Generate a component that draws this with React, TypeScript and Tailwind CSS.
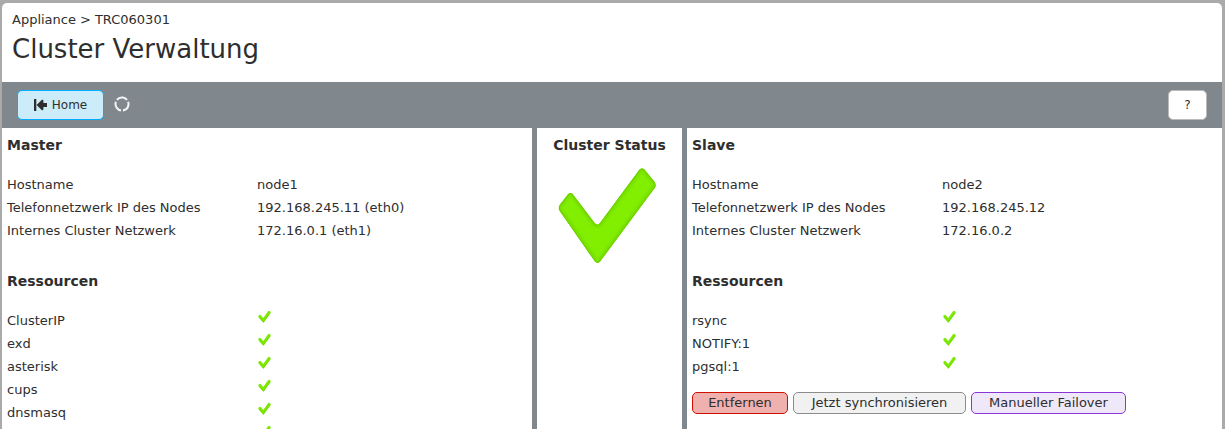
import React, { useId } from 'react';

type Detail = { label: string; value: string };

const masterDetails: Detail[] = [
  { label: 'Hostname', value: 'node1' },
  { label: 'Telefonnetzwerk IP des Nodes', value: '192.168.245.11 (eth0)' },
  { label: 'Internes Cluster Netzwerk', value: '172.16.0.1 (eth1)' },
];

const slaveDetails: Detail[] = [
  { label: 'Hostname', value: 'node2' },
  { label: 'Telefonnetzwerk IP des Nodes', value: '192.168.245.12' },
  { label: 'Internes Cluster Netzwerk', value: '172.16.0.2' },
];

const masterResources = ['ClusterIP', 'exd', 'asterisk', 'cups', 'dnsmasq', ''];
const slaveResources = ['rsync', 'NOTIFY:1', 'pgsql:1'];

function SmallCheck() {
  return (
    <svg viewBox="0 0 13 13" className="block size-[13px]" aria-hidden="true">
      <path d="M1.9 6.4 5.4 10.4 11.1 2.4" fill="none" stroke="#7cea00" strokeWidth="3" strokeLinecap="round" strokeLinejoin="miter" />
      <path d="M1.2 7.4 5.3 12.2 12.2 3" fill="none" stroke="#70d400" strokeWidth="0.7" />
    </svg>
  );
}

const bigCheckPath =
  'M14.2 25.6Q12 24.2 10.1 26.2L2 36.6Q-.2 39.6 1.6 42.8L37 93.6Q39.5 96.2 42 93.6L97 19.5Q98.4 17.2 96.6 14L86.4 1.6Q84 -.4 81.6 1.6L42 55Q39.5 58.4 36.6 55Z';

function BigCheck() {
  const id = useId();
  return (
    <svg viewBox="0 0 99 97" className="h-[97px] w-[99px]" aria-hidden="true">
      <defs>
        <clipPath id={id}>
          <path d={bigCheckPath} />
        </clipPath>
      </defs>
      <path d={bigCheckPath} fill="#82ef00" />
      <g clipPath={`url(#${id})`} fill="none">
        <path d={bigCheckPath} stroke="#7ae300" strokeWidth="9" opacity="0.45" />
        <path d={bigCheckPath} stroke="#73d800" strokeWidth="5" opacity="0.5" />
        <path d={bigCheckPath} stroke="#6aca00" strokeWidth="2" opacity="0.7" />
      </g>
    </svg>
  );
}

function HomeIcon() {
  return (
    <svg viewBox="0 0 13 12" className="h-3 w-[13px]" fill="#2e2e2e" aria-hidden="true">
      <path d="M0 0h2.3v12H0zM2.6 6 8.2.4 9.4 1.6V3.9H13v4.2H9.4v2.3L8.2 11.6z" />
    </svg>
  );
}

function Spinner() {
  return (
    <svg viewBox="0 0 16 16" className="size-4" aria-label="Aktualisierung" role="img">
      <circle cx="8" cy="8" r="6.5" fill="none" stroke="#f4f4f4" strokeWidth="2" pathLength="99" strokeDasharray="28 5" transform="rotate(99 8 8)" />
    </svg>
  );
}

function Heading({ children }: { children: React.ReactNode }) {
  return <h2 className="text-sm leading-[18px] font-bold">{children}</h2>;
}

function Node({ title, details, resources, children }: { title: string; details: Detail[]; resources: string[]; children?: React.ReactNode }) {
  return (
    <section className="min-w-0 bg-white px-[5px] pt-2">
      <Heading>{title}</Heading>
      <table className="mt-[19px] w-full table-fixed border-collapse text-left">
        <tbody>
          {details.map((d) => (
            <tr key={d.label} className="h-[23px]">
              <th scope="row" className="w-[250px] p-0 font-normal">{d.label}</th>
              <td className="p-0">{d.value}</td>
            </tr>
          ))}
        </tbody>
      </table>
      <div className="mt-[30px]">
        <Heading>Ressourcen</Heading>
      </div>
      <table className="mt-[19px] w-full table-fixed border-collapse text-left">
        <tbody>
          {resources.map((name) => (
            <tr key={name} className="h-[23px]">
              <th scope="row" className="w-[250px] p-0 font-normal">{name}</th>
              <td className="p-0 pb-2 pl-px" aria-label="OK"><SmallCheck /></td>
            </tr>
          ))}
        </tbody>
      </table>
      {children}
    </section>
  );
}

export default function App() {
  return (
    <div className="h-screen overflow-hidden bg-[#aaaaaa] pt-[3px] pr-[3px] pl-0.5 font-['DejaVu_Sans',Verdana,sans-serif] text-[13px] leading-[18px] text-[#2e2e2e]">
      <main className="flex min-h-full flex-col overflow-hidden rounded-t-[5px] bg-white">
        <header className="h-[79px] px-2.5 pt-2">
          <nav aria-label="Pfad" className="flex gap-1">
            <a href="#appliance">Appliance</a>
            <span>&gt;</span>
            <a href="#node">TRC060301</a>
          </nav>
          <h1 className="mt-1 text-[26px] leading-8">Cluster Verwaltung</h1>
        </header>
        <div className="flex h-[46px] items-center bg-[#81888d] px-[15px]">
          <button type="button" className="flex h-[30px] w-[87px] items-center justify-center gap-[5px] rounded-[5px] border border-[#00aeff] bg-[#cdecf9] text-xs">
            <HomeIcon />
            Home
          </button>
          <span className="ml-2.5 pb-0.5"><Spinner /></span>
          <button type="button" className="ml-auto h-[30px] w-[39px] rounded-[5px] border border-[#bbbbbb] bg-white text-xs">?</button>
        </div>
        <div className="grid flex-1 grid-cols-[530fr_145px_535fr] gap-[5px] bg-[#81888d]">
          <Node title="Master" details={masterDetails} resources={masterResources} />
          <section className="flex flex-col items-center bg-white pt-2">
            <Heading>Cluster Status</Heading>
            <div className="mt-3.5 pr-1"><BigCheck /></div>
          </section>
          <Node title="Slave" details={slaveDetails} resources={slaveResources}>
            <div className="mt-[14px] flex gap-[5px]">
              <button type="button" className="h-[22px] w-24 rounded-[5px] border border-[#cc1100] bg-[#f0b0ae]">Entfernen</button>
              <button type="button" className="h-[22px] w-[173px] rounded-[5px] border border-[#8c8c8c] bg-[#f1f1f1]">Jetzt synchronisieren</button>
              <button type="button" className="h-[22px] w-[155px] rounded-[5px] border border-[#8a35d8] bg-[#efe8f8]">Manueller Failover</button>
            </div>
          </Node>
        </div>
      </main>
    </div>
  );
}
